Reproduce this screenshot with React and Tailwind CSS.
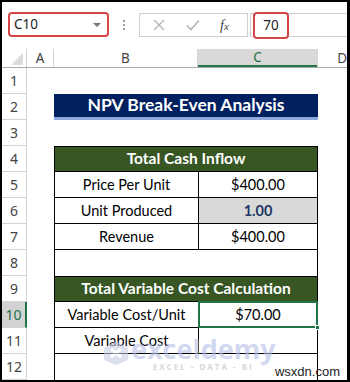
import React from "react";

const cellFont = { fontFamily: 'Lato, "Open Sans", sans-serif' };
const uiFont = { fontFamily: '"Noto Sans", "Open Sans", sans-serif' };

function RowHead({ n, active }) {
  return (
    <div
      className={
        active
          ? "w-[25px] shrink-0 h-full flex items-center justify-center border-b border-[#d4d4d4] border-r-2 border-r-[#217346] bg-[#d2d2d2] text-[14px] text-[#217346]"
          : "w-[25px] shrink-0 h-full flex items-center justify-center border-b border-r border-[#d4d4d4] bg-white text-[14px] text-[#444]"
      }
      style={uiFont}
    >
      {n}
    </div>
  );
}

function Row({ n, active, children }) {
  return (
    <div className="flex h-[26px]">
      <RowHead n={n} active={active} />
      <div className="w-[27px] shrink-0" />
      <div className="w-[264px] shrink-0 h-full flex">{children}</div>
      <div className="flex-1" />
    </div>
  );
}

function Pair({ label, value, valueCls = "" }) {
  return (
    <>
      <div className="w-[144px] h-full border-l border-b border-black flex items-center justify-center text-[14.5px] text-black">
        {label}
      </div>
      <div className={"flex-1 h-full border-l border-r border-b border-black flex items-center justify-center text-[14.5px] " + valueCls}>
        {value}
      </div>
    </>
  );
}

function GreenHead({ text }) {
  return (
    <div className="w-full h-full bg-[#375623] border border-black flex items-center justify-center text-white font-bold text-[15.5px]">
      {text}
    </div>
  );
}

export default function App() {
  return (
    <div className="w-[350px] h-[382px] bg-black pt-[2px] pl-[2px] pr-[3px] pb-[2px] overflow-hidden">
      <div className="relative w-full h-full bg-white overflow-hidden">
        {/* toolbar */}
        <div className="h-[47px] flex items-start pt-[10px] pl-[6px] pr-0">
          <div className="w-[101px] h-[25px] border-2 border-[#d64545] rounded-[4px] flex items-center justify-between pl-[4px] pr-[6px]" style={uiFont}>
            <span className="text-[13.5px] text-[#222]">C10</span>
            <span className="w-0 h-0 border-l-[4px] border-r-[4px] border-t-[4px] border-l-transparent border-r-transparent border-t-[#777]" />
          </div>
          <div className="w-[30px] h-[25px] flex flex-col items-center justify-center gap-[2px]">
            <span className="w-[2px] h-[2px] bg-[#999]" />
            <span className="w-[2px] h-[2px] bg-[#999]" />
            <span className="w-[2px] h-[2px] bg-[#999]" />
          </div>
          <div className="mt-[1px] w-[109px] h-[24px] border border-[#cfcfcf] flex items-center">
            <svg width="12" height="12" viewBox="0 0 12 12" className="ml-[13px]">
              <path d="M1 1 L11 11 M11 1 L1 11" stroke="#b4b4b4" strokeWidth="1.4" fill="none" />
            </svg>
            <svg width="14" height="12" viewBox="0 0 14 12" className="ml-[21px]">
              <path d="M1 6.5 L5 10.5 L13 1.5" stroke="#b4b4b4" strokeWidth="1.6" fill="none" />
            </svg>
            <span className="ml-[20px] text-[14px] italic text-[#444]" style={{ fontFamily: '"Liberation Serif", serif' }}>
              f<span className="text-[11px]">x</span>
            </span>
          </div>
          <div className="mt-[1px] ml-[2px] flex-1 h-[24px] border-t border-b border-l border-[#cfcfcf] flex items-center">
            <div className="ml-[2px] w-[36px] h-[27px] border-2 border-[#d64545] rounded-[4px] bg-white flex items-center justify-center text-[13.5px] text-[#222]" style={uiFont}>
              70
            </div>
          </div>
        </div>

        {/* column headers */}
        <div className="flex h-[19px] border-b border-[#ababab] text-[13.5px] text-[#444]" style={uiFont}>
          <div className="w-[25px] shrink-0 h-full border-r border-[#d4d4d4] flex items-end justify-end pr-[3px] pb-[2px]">
            <svg width="12" height="12" viewBox="0 0 12 12">
              <path d="M12 0 L12 12 L0 12 Z" fill="#dcdcdc" />
            </svg>
          </div>
          <div className="w-[27px] shrink-0 h-full border-r border-[#d4d4d4] flex items-center justify-center">A</div>
          <div className="w-[144px] shrink-0 h-full border-r border-[#d4d4d4] flex items-center justify-center">B</div>
          <div className="w-[119px] shrink-0 h-full bg-[#d9d9d9] border-b-2 border-[#217346] flex items-center justify-center text-[#217346]">C</div>
          <div className="flex-1 h-full border-l border-[#d4d4d4] flex items-center justify-end">D</div>
        </div>

        {/* sheet */}
        <div style={cellFont}>
          <Row n={1} />
          <Row n={2}>
            <div className="w-full h-full bg-[#002060] border-b-[3px] border-[#8ea9db] flex items-center justify-center text-white font-bold text-[17.5px]">
              NPV Break-Even Analysis
            </div>
          </Row>
          <Row n={3} />
          <Row n={4}>
            <GreenHead text="Total Cash Inflow" />
          </Row>
          <Row n={5}>
            <Pair label="Price Per Unit" value="$400.00" />
          </Row>
          <Row n={6}>
            <Pair label="Unit Produced" value="1.00" valueCls="bg-[#d9d9d9] font-bold text-[#203864]" />
          </Row>
          <Row n={7}>
            <Pair label="Revenue" value="$400.00" />
          </Row>
          <Row n={8}>
            <div className="w-full h-full border-l border-r border-black" />
          </Row>
          <Row n={9}>
            <GreenHead text="Total Variable Cost Calculation" />
          </Row>
          <Row n={10} active>
            <div className="w-[144px] h-full border-l border-b border-black flex items-center justify-center text-[14.5px]">
              Variable Cost/Unit
            </div>
            <div className="relative flex-1 h-full border-l border-r border-b border-black flex items-center justify-center text-[14.5px]">
              $70.00
              <div className="absolute -left-[1px] -top-[1px] -right-[1px] -bottom-[1px] border-2 border-[#217346]" />
              <div className="absolute -right-[3px] -bottom-[3px] w-[5px] h-[5px] bg-[#217346] border border-white" />
            </div>
          </Row>
          <Row n={11}>
            <Pair label="Variable Cost" value="" />
          </Row>
          <Row n={12}>
            <div className="w-full h-full border-l border-r border-black" />
          </Row>
        </div>

        {/* watermark */}
        <div className="absolute left-[100px] top-[334px] flex items-start opacity-60 pointer-events-none">
          <svg width="28" height="26" viewBox="0 0 28 26" className="mt-[4px]">
            <path d="M14 1 L26 8 L26 20 L14 25 L2 20 L2 8 Z" fill="#c5cde6" />
            <path d="M9 9 L19 17 M19 9 L9 17" stroke="#ffffff" strokeWidth="3" />
          </svg>
          <div className="flex flex-col items-center ml-[1px]">
            <span className="text-[27px] leading-[26px] font-bold text-[#b3bfe6]" style={{ fontFamily: '"Open Sans", sans-serif' }}>
              exceldemy
            </span>
            <span className="text-[8px] leading-[9px] font-bold tracking-[2px] text-[#bdbdbd]" style={{ fontFamily: '"Open Sans", sans-serif' }}>
              EXCEL - DATA - BI
            </span>
          </div>
        </div>

        <div className="absolute right-[7px] bottom-[1px] text-[13px] text-[#222] leading-[14px]" style={{ fontFamily: '"Liberation Sans", sans-serif' }}>
          wsxdn.com
        </div>
      </div>
    </div>
  );
}
